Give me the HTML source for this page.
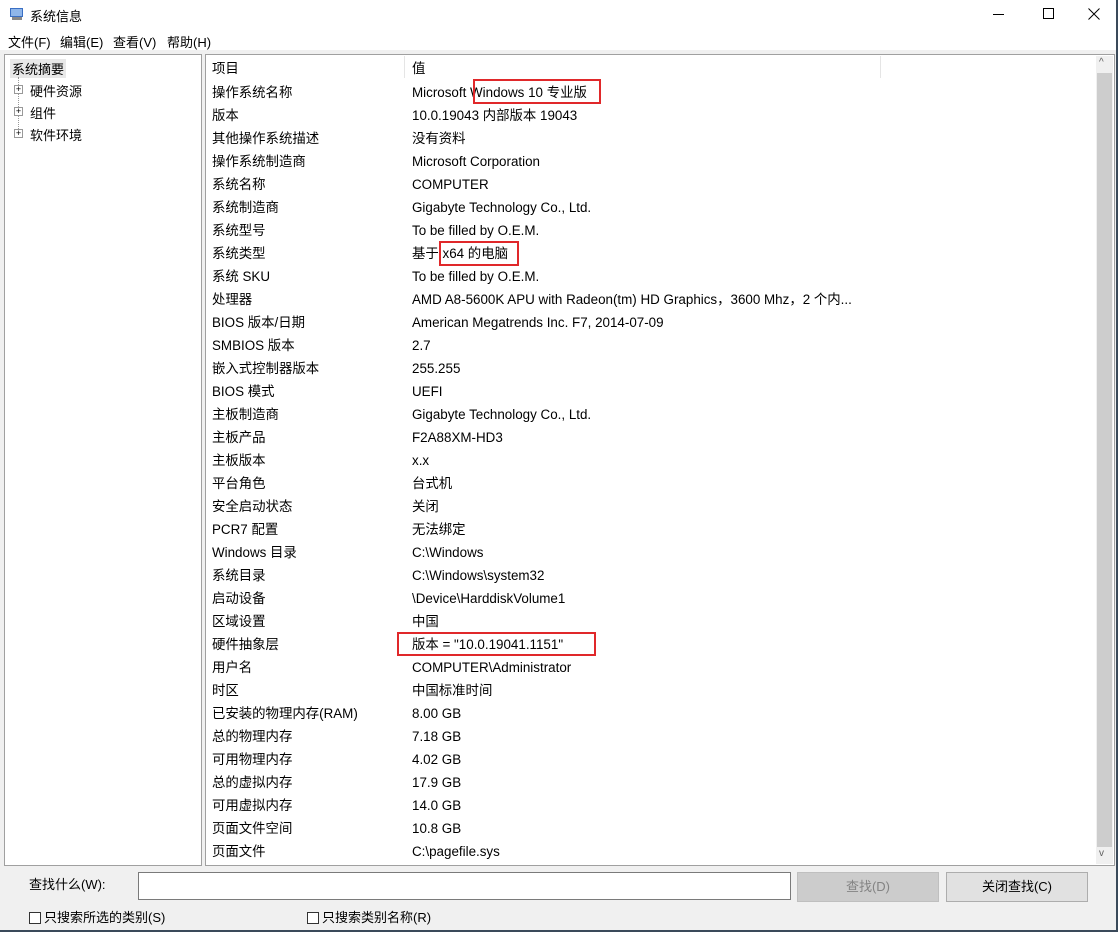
<!DOCTYPE html>
<html><head><meta charset="utf-8"><style>
*{margin:0;padding:0;box-sizing:border-box}
body{width:1118px;height:932px;background:#f0f0f0;font-family:"Liberation Sans","Noto Sans CJK SC",sans-serif;font-size:13px;color:#000;position:relative;overflow:hidden}
.abs{position:absolute;white-space:nowrap}
.title{left:0;top:0;width:1118px;height:30px;background:#fff}
.menu{left:0;top:30px;width:1118px;height:20px;background:#fff}
.panel{background:#fff;border:1px solid #a0a0a0}
.red{position:absolute;border:2px solid #e0282a}
.row{position:absolute;left:212px;height:23px;line-height:23px;white-space:nowrap;font-size:13.4px}
.row span{position:absolute;left:200px;top:0;white-space:nowrap}
.btn{border:1px solid #adadad;background:#e1e1e1;text-align:center;line-height:28px}
.cb{width:12px;height:12px;border:1px solid #333;background:#fff;display:inline-block;vertical-align:-2px;margin-right:3px}
</style></head><body>
<div class="abs title"></div>
<div class="abs menu"></div>
<svg class="abs" style="left:9px;top:6px" width="16" height="16"><rect x="1" y="2" width="13" height="9" fill="#3a6fc4"/><rect x="2" y="3" width="11" height="7" fill="#8fb6ea"/><rect x="3" y="11" width="10" height="3" fill="#888"/></svg>
<div class="abs" style="left:30px;top:6px;font-size:13px">系统信息</div>
<div class="abs" style="left:993px;top:14px;width:11px;height:1px;background:#000"></div>
<div class="abs" style="left:1043px;top:8px;width:11px;height:11px;border:1px solid #000"></div>
<svg class="abs" style="left:1088px;top:8px" width="12" height="12"><path d="M0.5 0.5L11.5 11.5M11.5 0.5L0.5 11.5" stroke="#000" stroke-width="1"/></svg>
<div class="abs" style="left:8px;top:32px">文件(F)</div>
<div class="abs" style="left:60px;top:32px">编辑(E)</div>
<div class="abs" style="left:113px;top:32px">查看(V)</div>
<div class="abs" style="left:167px;top:32px">帮助(H)</div>

<div class="abs panel" style="left:4px;top:54px;width:198px;height:812px"></div>
<div class="abs" style="left:10px;top:59px;background:#e8e8e8;padding:0 2px">系统摘要</div>
<div class="abs" style="left:18px;top:77px;width:1px;height:56px;border-left:1px dotted #999"></div>
<div class="abs" style="left:14px;top:85px;width:9px;height:9px;border:1px solid #999;background:#fff;font-size:9px;line-height:7px;text-align:center">+</div>
<div class="abs" style="left:14px;top:107px;width:9px;height:9px;border:1px solid #999;background:#fff;font-size:9px;line-height:7px;text-align:center">+</div>
<div class="abs" style="left:14px;top:129px;width:9px;height:9px;border:1px solid #999;background:#fff;font-size:9px;line-height:7px;text-align:center">+</div>
<div class="abs" style="left:30px;top:81px">硬件资源</div>
<div class="abs" style="left:30px;top:103px">组件</div>
<div class="abs" style="left:30px;top:125px">软件环境</div>

<div class="abs panel" style="left:205px;top:54px;width:910px;height:812px"></div>
<div class="abs" style="left:404px;top:56px;width:1px;height:22px;background:#e5e5e5"></div>
<div class="abs" style="left:880px;top:56px;width:1px;height:22px;background:#e5e5e5"></div>
<div class="abs" style="left:1096px;top:56px;width:17px;height:808px;background:#f0f0f0"></div>
<div class="abs" style="left:1097px;top:73px;width:15px;height:774px;background:#cdcdcd"></div>
<div class="abs" style="left:1099px;top:57px;font-size:10px;color:#606060">&#94;</div>
<div class="abs" style="left:1099px;top:848px;font-size:10px;color:#606060">v</div>

<div class="row" style="top:57px">项目<span>值</span></div>
<div class="row" style="top:81px">操作系统名称<span>Microsoft Windows 10 专业版</span></div>
<div class="row" style="top:104px">版本<span>10.0.19043 内部版本 19043</span></div>
<div class="row" style="top:127px">其他操作系统描述<span>没有资料</span></div>
<div class="row" style="top:150px">操作系统制造商<span>Microsoft Corporation</span></div>
<div class="row" style="top:173px">系统名称<span>COMPUTER</span></div>
<div class="row" style="top:196px">系统制造商<span>Gigabyte Technology Co., Ltd.</span></div>
<div class="row" style="top:219px">系统型号<span>To be filled by O.E.M.</span></div>
<div class="row" style="top:242px">系统类型<span>基于 x64 的电脑</span></div>
<div class="row" style="top:265px">系统 SKU<span>To be filled by O.E.M.</span></div>
<div class="row" style="top:288px">处理器<span>AMD A8-5600K APU with Radeon(tm) HD Graphics，3600 Mhz，2 个内...</span></div>
<div class="row" style="top:311px">BIOS 版本/日期<span>American Megatrends Inc. F7, 2014-07-09</span></div>
<div class="row" style="top:334px">SMBIOS 版本<span>2.7</span></div>
<div class="row" style="top:357px">嵌入式控制器版本<span>255.255</span></div>
<div class="row" style="top:380px">BIOS 模式<span>UEFI</span></div>
<div class="row" style="top:403px">主板制造商<span>Gigabyte Technology Co., Ltd.</span></div>
<div class="row" style="top:426px">主板产品<span>F2A88XM-HD3</span></div>
<div class="row" style="top:449px">主板版本<span>x.x</span></div>
<div class="row" style="top:472px">平台角色<span>台式机</span></div>
<div class="row" style="top:495px">安全启动状态<span>关闭</span></div>
<div class="row" style="top:518px">PCR7 配置<span>无法绑定</span></div>
<div class="row" style="top:541px">Windows 目录<span>C:\Windows</span></div>
<div class="row" style="top:564px">系统目录<span>C:\Windows\system32</span></div>
<div class="row" style="top:587px">启动设备<span>\Device\HarddiskVolume1</span></div>
<div class="row" style="top:610px">区域设置<span>中国</span></div>
<div class="row" style="top:633px">硬件抽象层<span>版本 = "10.0.19041.1151"</span></div>
<div class="row" style="top:656px">用户名<span>COMPUTER\Administrator</span></div>
<div class="row" style="top:679px">时区<span>中国标准时间</span></div>
<div class="row" style="top:702px">已安装的物理内存(RAM)<span>8.00 GB</span></div>
<div class="row" style="top:725px">总的物理内存<span>7.18 GB</span></div>
<div class="row" style="top:748px">可用物理内存<span>4.02 GB</span></div>
<div class="row" style="top:771px">总的虚拟内存<span>17.9 GB</span></div>
<div class="row" style="top:794px">可用虚拟内存<span>14.0 GB</span></div>
<div class="row" style="top:817px">页面文件空间<span>10.8 GB</span></div>
<div class="row" style="top:840px">页面文件<span>C:\pagefile.sys</span></div>

<div class="red" style="left:473px;top:79px;width:128px;height:25px"></div>
<div class="red" style="left:439px;top:241px;width:80px;height:25px"></div>
<div class="red" style="left:397px;top:632px;width:199px;height:24px"></div>

<div class="abs" style="left:29px;top:874px">查找什么(W):</div>
<div class="abs" style="left:138px;top:872px;width:653px;height:28px;background:#fff;border:1px solid #7a7a7a"></div>
<div class="abs btn" style="left:797px;top:872px;width:142px;height:30px;background:#cccccc;border-color:#bfbfbf;color:#838383">查找(D)</div>
<div class="abs btn" style="left:946px;top:872px;width:142px;height:30px">关闭查找(C)</div>
<div class="abs" style="left:29px;top:907px"><i class="cb"></i>只搜索所选的类别(S)</div>
<div class="abs" style="left:307px;top:907px"><i class="cb"></i>只搜索类别名称(R)</div>
<div class="abs" style="left:1116px;top:0;width:2px;height:932px;background:#3a4a5a"></div>
<div class="abs" style="left:0;top:930px;width:1118px;height:2px;background:#3a4a5a"></div>
</body></html>
